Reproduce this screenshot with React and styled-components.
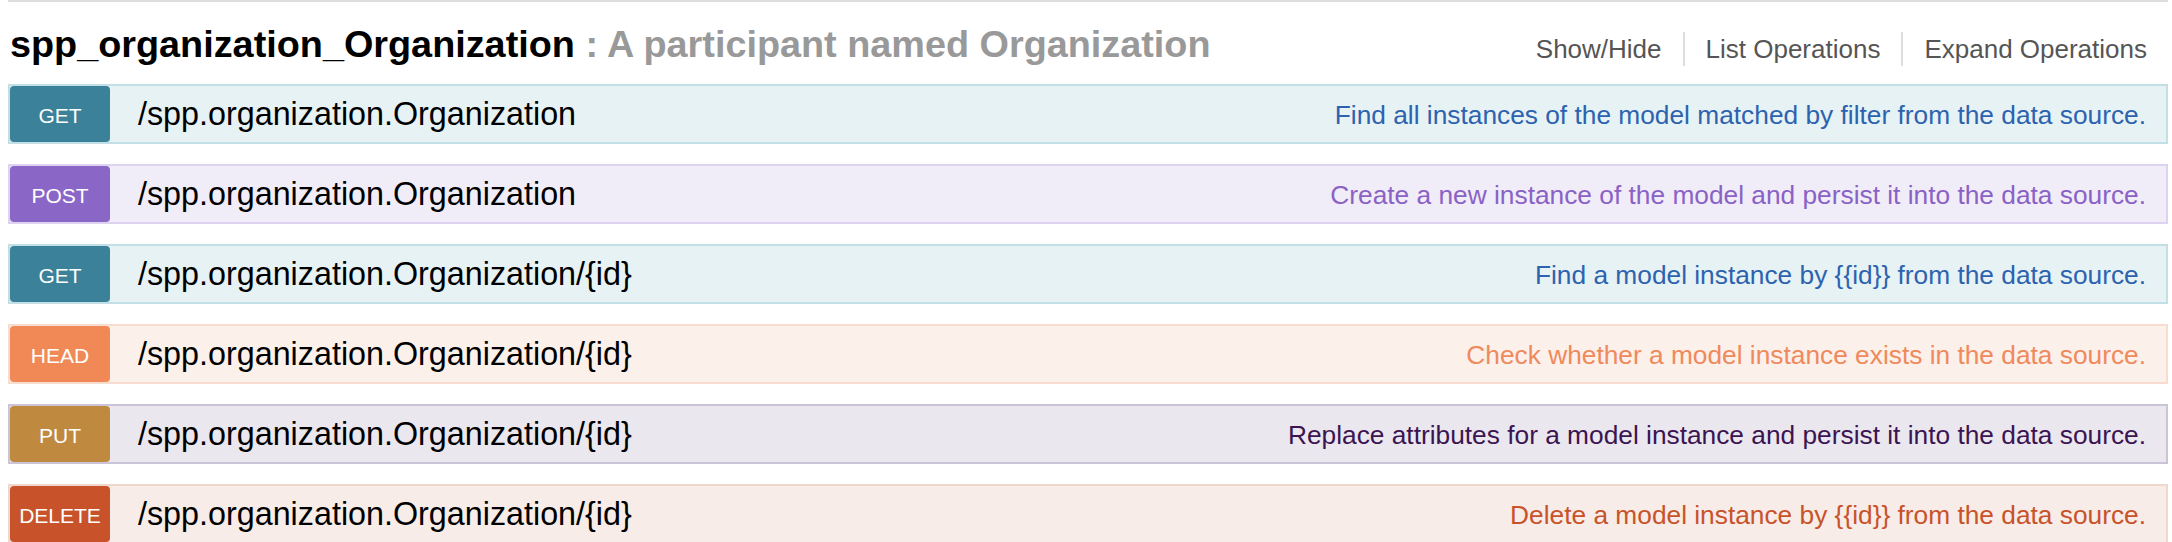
import React from 'react';
import styled, { createGlobalStyle } from 'styled-components';

const GlobalStyle = createGlobalStyle`
  body {
    margin: 0;
    background: #ffffff;
    font-family: "Liberation Sans", Arial, Helvetica, sans-serif;
  }
`;

const METHOD_THEMES = {
  get: { badge: '#3b8199', bg: '#e7f2f5', border: '#c3dfe6', text: '#2d63ae' },
  post: { badge: '#8a66c7', bg: '#f1edf8', border: '#ded2f1', text: '#8a62c6' },
  head: { badge: '#f08956', bg: '#fcf0eb', border: '#f8dccf', text: '#ef8a5c' },
  put: { badge: '#bf8a3f', bg: '#ebe7ef', border: '#cbc3d6', text: '#3b1552' },
  delete: { badge: '#c8532a', bg: '#f7ece7', border: '#efd7cc', text: '#c8532a' },
};

const Resource = styled.div`
  margin: 0 4px 0 8px;
  border-top: 2px solid #dddddd;
`;

const ResourceHeader = styled.div`
  display: flex;
  justify-content: space-between;
  align-items: flex-start;
  height: 82px;
  box-sizing: border-box;
  padding: 20px 0 0 2px;
`;

const Title = styled.h2`
  margin: 0;
  font-size: 37.8px;
  line-height: 44px;
  font-weight: bold;
  color: #999999;
  white-space: nowrap;
`;

const TitleName = styled.span`
  color: #000000;
`;

const Options = styled.ul`
  display: flex;
  list-style: none;
  margin: 10px 0 0 0;
  padding: 0;
`;

const OptionItem = styled.li`
  padding: 0 21px;
  font-size: 26px;
  line-height: 34px;
  color: #555555;
  border-left: ${(props) => (props.first ? 'none' : '2px solid #dddddd')};
`;

const Operations = styled.div`
  display: flex;
  flex-direction: column;
  gap: 20px;
`;

const OperationRow = styled.div`
  display: flex;
  align-items: center;
  height: 60px;
  box-sizing: border-box;
  background: ${(props) => METHOD_THEMES[props.method].bg};
  border: 2px solid ${(props) => METHOD_THEMES[props.method].border};
`;

const MethodBadge = styled.span`
  flex: none;
  width: 100px;
  height: 56px;
  box-sizing: border-box;
  padding: 13px 0 9px;
  border-radius: 4px;
  background: ${(props) => METHOD_THEMES[props.method].badge};
  color: #ffffff;
  font-size: 21px;
  line-height: 34px;
  text-align: center;
  text-transform: uppercase;
`;

const Path = styled.span`
  margin-left: 28px;
  font-size: 32.3px;
  line-height: 56px;
  color: #000000;
  white-space: nowrap;
`;

const Description = styled.span`
  margin-left: auto;
  padding: 2px 20px 0 0;
  font-size: 26.3px;
  line-height: 54px;
  color: ${(props) => METHOD_THEMES[props.method].text};
  white-space: nowrap;
`;

const operations = [
  {
    method: 'get',
    path: '/spp.organization.Organization',
    summary: 'Find all instances of the model matched by filter from the data source.',
  },
  {
    method: 'post',
    path: '/spp.organization.Organization',
    summary: 'Create a new instance of the model and persist it into the data source.',
  },
  {
    method: 'get',
    path: '/spp.organization.Organization/{id}',
    summary: 'Find a model instance by {{id}} from the data source.',
  },
  {
    method: 'head',
    path: '/spp.organization.Organization/{id}',
    summary: 'Check whether a model instance exists in the data source.',
  },
  {
    method: 'put',
    path: '/spp.organization.Organization/{id}',
    summary: 'Replace attributes for a model instance and persist it into the data source.',
  },
  {
    method: 'delete',
    path: '/spp.organization.Organization/{id}',
    summary: 'Delete a model instance by {{id}} from the data source.',
  },
];

const App = () => {
  return (
    <>
      <GlobalStyle />
      <Resource>
        <ResourceHeader>
          <Title>
            <TitleName>spp_organization_Organization</TitleName> : A participant named Organization
          </Title>
          <Options>
            <OptionItem first>Show/Hide</OptionItem>
            <OptionItem>List Operations</OptionItem>
            <OptionItem>Expand Operations</OptionItem>
          </Options>
        </ResourceHeader>

        <Operations>
          {operations.map((op, index) => (
            <OperationRow key={index} method={op.method}>
              <MethodBadge method={op.method}>{op.method}</MethodBadge>
              <Path>{op.path}</Path>
              <Description method={op.method}>{op.summary}</Description>
            </OperationRow>
          ))}
        </Operations>
      </Resource>
    </>
  );
};

export default App;
